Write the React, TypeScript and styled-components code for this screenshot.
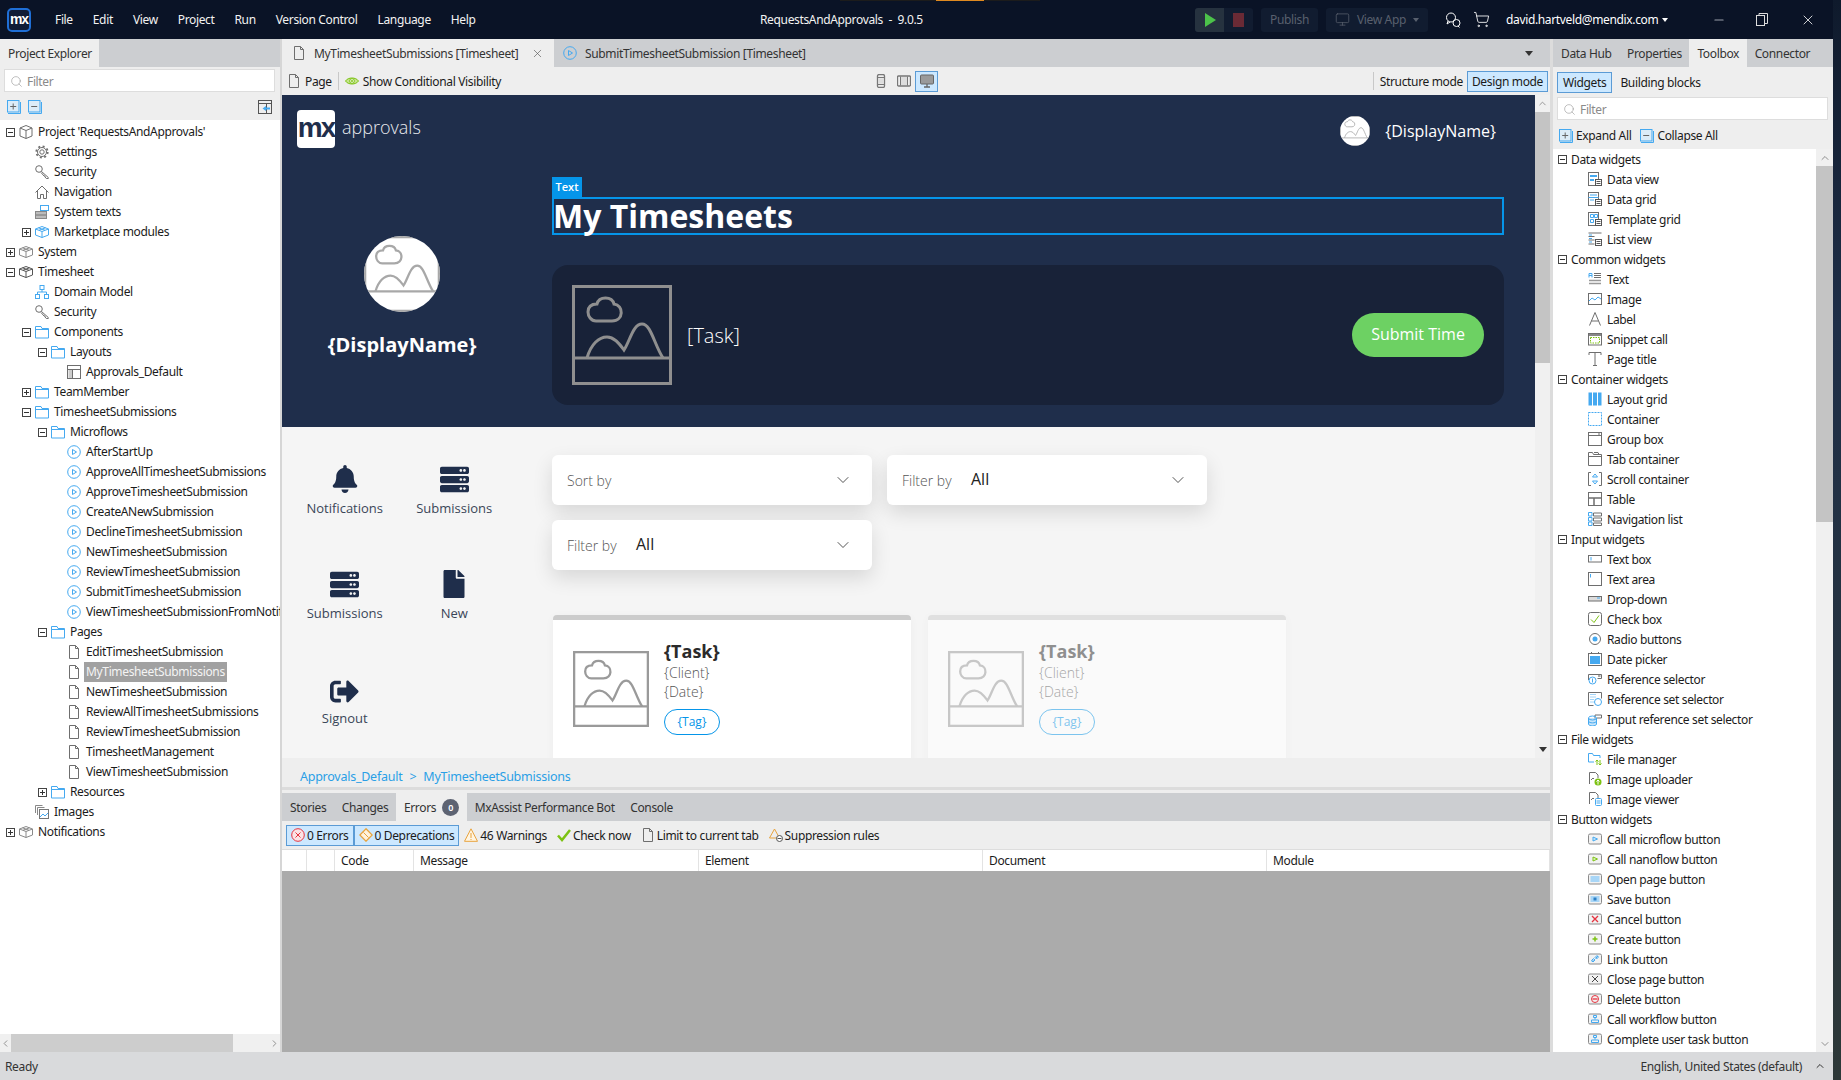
import React from "react";
import styled, { createGlobalStyle } from "styled-components";
import { ChevronDown, ChevronLeft, ChevronRight, ChevronUp, Minus, Monitor, Search, ShoppingCart, X } from "lucide-react";
import { FaBell, FaFile, FaServer, FaSignOutAlt } from "react-icons/fa";

const B = "#45a9f0";
const G = "#7cc212";
const R = "#e5333f";
const O = "#e8a33d";
const D = "#6e6e6e";

const GlobalStyle = createGlobalStyle`
    html, body {
        margin: 0;
        padding: 0;
        background: #1f2b3a;
    }
    body {
        font-family: "Noto Sans", "Open Sans", sans-serif;
        font-size: 12px;
        letter-spacing: -0.35px;
        color: #1b1b1b;
    }
    * {
        box-sizing: border-box;
    }
`;

const Screen = styled.div`
    display: flex;
    width: 1841px;
    height: 1080px;
    overflow: hidden;
`;

const Desktop = styled.div`
    flex: 1;
    background: linear-gradient(#0f1a2c, #1f2f48 30%, #2d3838);
`;

const Window = styled.div`
    width: 1833px;
    height: 1080px;
    display: flex;
    flex-direction: column;
    background: #eee;
`;

const TopBar = styled.div`
    position: relative;
    height: 39px;
    flex: none;
    display: flex;
    align-items: center;
    background: #0a1326;
    color: #f2f2f2;
`;

const Progress = styled.div`
    position: absolute;
    top: 0;
    left: 840px;
    width: 200px;
    height: 1px;
    background: #1c1c1c;
    &::after {
        content: "";
        display: block;
        width: 48px;
        height: 1px;
        margin-left: 96px;
        background: #e08a20;
    }
`;

const TopLogo = styled.div`
    width: 24px;
    height: 24px;
    margin-left: 7px;
    border: 2px solid #1f6fd6;
    border-radius: 5px;
    background: #101c36;
    color: #fff;
    font: bold 14px/18px "Liberation Sans", sans-serif;
    letter-spacing: -1px;
    text-align: center;
`;

const Menu = styled.div`
    width: 729px;
    padding-left: 24px;
    display: flex;
    gap: 20px;
`;

const AppTitle = styled.div`
    white-space: pre;
`;

const TopRight = styled.div`
    margin-left: auto;
    width: 638px;
    display: flex;
    align-items: center;
    color: #fff;
`;

const RunGroup = styled.div`
    display: flex;
    height: 24px;
    border-radius: 3px;
    overflow: hidden;
    background: #111c30;
`;

const RunButton = styled.div<{ $active?: boolean }>`
    width: 29px;
    display: flex;
    align-items: center;
    justify-content: center;
    background: ${(p) => (p.$active ? "#26323f" : "transparent")};
`;

const TopButton = styled.div`
    height: 24px;
    margin-left: 8px;
    padding: 0 9px;
    display: flex;
    align-items: center;
    gap: 7px;
    border-radius: 3px;
    background: #111c30;
    color: #59606e;
`;

const Caret = styled.span<{ $color: string }>`
    width: 0;
    height: 0;
    border: 3px solid transparent;
    border-top: 4px solid ${(p) => p.$color};
    margin-top: 3px;
`;

const TopIcon = styled.div<{ $left: number }>`
    margin-left: ${(p) => p.$left}px;
    display: flex;
    align-items: center;
`;

const Email = styled.div`
    margin-left: 16px;
    display: flex;
    align-items: center;
    gap: 4px;
`;

const Main = styled.div`
    flex: 1;
    min-height: 0;
    display: flex;
`;

const StatusBar = styled.div`
    height: 28px;
    flex: none;
    display: flex;
    align-items: center;
    justify-content: space-between;
    padding: 0 7px 0 5px;
    background: #d9dadc;
    color: #333;
`;

const StatusRight = styled.div`
    display: flex;
    align-items: center;
    gap: 12px;
`;

const LeftPane = styled.div`
    width: 282px;
    flex: none;
    display: flex;
    flex-direction: column;
    border-right: 2px solid #d6d6d6;
`;

const TabStrip = styled.div`
    height: 28px;
    flex: none;
    display: flex;
    background: #ccced1;
    color: #333;
`;

const PaneTab = styled.div<{ $active?: boolean }>`
    padding: 0 7.5px 0 8px;
    display: flex;
    align-items: center;
    gap: 6px;
    white-space: nowrap;
    background: ${(p) => (p.$active ? "#eeeeee" : "transparent")};
`;

const FilterBox = styled.div`
    height: 23px;
    display: flex;
    align-items: center;
    gap: 4px;
    padding: 2px 0 0 5px;
    background: #fff;
    border: 1px solid #ddd;
    color: #8a8a8a;
`;

const LeftFilter = styled(FilterBox)`
    margin: 2px 5px 1px 4px;
`;

const LeftTools = styled.div`
    height: 27px;
    flex: none;
    display: flex;
    align-items: center;
    gap: 7px;
    padding: 0 8px 0 7px;
`;

const ToolGap = styled.div`
    flex: 1;
`;

const TreeArea = styled.div`
    flex: 1;
    min-height: 0;
    padding-top: 2px;
    overflow: hidden;
    background: #fff;
`;

const TreeRow = styled.div<{ $level: number }>`
    height: 20px;
    display: flex;
    align-items: center;
    white-space: nowrap;
    padding-left: ${(p) => 6 + p.$level * 16}px;
`;

const Expander = styled.span<{ $state?: "open" | "closed" }>`
    position: relative;
    width: 9px;
    height: 9px;
    flex: none;
    margin-right: 4px;
    border: ${(p) => (p.$state ? "1px solid #444" : "none")};
    &::before {
        content: "";
        display: ${(p) => (p.$state ? "block" : "none")};
        position: absolute;
        left: 1px;
        top: 3px;
        width: 5px;
        height: 1px;
        background: #333;
    }
    &::after {
        content: "";
        display: ${(p) => (p.$state === "closed" ? "block" : "none")};
        position: absolute;
        left: 3px;
        top: 1px;
        width: 1px;
        height: 5px;
        background: #333;
    }
`;

const TreeLabel = styled.span<{ $selected?: boolean }>`
    margin-left: 3px;
    padding: 0 2px;
    line-height: 20px;
    background: ${(p) => (p.$selected ? "#a1a1a1" : "transparent")};
    color: ${(p) => (p.$selected ? "#f4f4f4" : "inherit")};
`;

const HScroll = styled.div`
    height: 18px;
    flex: none;
    display: flex;
    align-items: center;
    background: #f0f0f0;
    color: #8a8a8a;
`;

const HThumb = styled.div`
    width: 222px;
    height: 100%;
    margin: 0 auto 0 0;
    background: #cdcdcd;
`;

const Center = styled.div`
    width: 1268px;
    flex: none;
    display: flex;
    flex-direction: column;
`;

const EditorTab = styled(PaneTab)`
    width: 272px;
    padding: 0 10px;
    gap: 8px;
`;

const EditorTabInactive = styled(PaneTab)`
    margin-left: 1px;
    gap: 8px;
`;

const TabText = styled.span`
    flex: 1;
`;

const StripEnd = styled.div`
    margin-left: auto;
    width: 25px;
    display: flex;
    align-items: center;
`;

const DownTriangle = styled.span`
    width: 0;
    height: 0;
    border: 4px solid transparent;
    border-top: 5px solid #333;
    margin-top: 4px;
`;

const EditorTools = styled.div`
    height: 28px;
    flex: none;
    display: grid;
    grid-template-columns: 582px auto 1fr;
    align-items: center;
    padding: 0 2px 0 5px;
`;

const ToolGroup = styled.div<{ $end?: boolean }>`
    display: flex;
    align-items: center;
    gap: 4px;
    justify-content: ${(p) => (p.$end ? "flex-end" : "flex-start")};
`;

const Separator = styled.span`
    width: 1px;
    height: 18px;
    margin: 0 2px;
    background: #c8c8c8;
`;

const ToggleButton = styled.div<{ $on?: boolean }>`
    height: 21px;
    padding: 0 4px;
    display: flex;
    align-items: center;
    gap: 2px;
    border: 1px solid ${(p) => (p.$on ? "#5b9bd5" : "transparent")};
    background: ${(p) => (p.$on ? "#cce8ff" : "transparent")};
    white-space: nowrap;
`;

const DeviceGroup = styled.div`
    display: flex;
    align-items: center;
`;

const DeviceButton = styled(ToggleButton)`
    width: 23px;
    padding: 0;
    justify-content: center;
`;

const CanvasArea = styled.div`
    height: 663px;
    flex: none;
    display: flex;
`;

const Page = styled.div`
    flex: 1;
    min-width: 0;
    overflow: hidden;
    background: #f5f5f5;
    font-family: "Open Sans", sans-serif;
    letter-spacing: 0;
`;

const VScroll = styled.div<{ $width: number }>`
    width: ${(p) => p.$width}px;
    flex: none;
    display: flex;
    flex-direction: column;
    background: #f0f0f0;
    color: #8f8f8f;
`;

const ScrollArrow = styled.div`
    height: 17px;
    flex: none;
    display: flex;
    align-items: center;
    justify-content: center;
`;

const VThumb = styled.div<{ $height: number }>`
    height: ${(p) => p.$height}px;
    flex: none;
    background: #c4c4c4;
`;

const ScrollRest = styled.div`
    flex: 1;
`;

const Hero = styled.div`
    height: 332px;
    padding: 15px 31px 22px 15px;
    background: #1f2e4b;
    color: #fff;
`;

const HeroHeader = styled.div`
    display: flex;
    align-items: center;
    justify-content: space-between;
    height: 38px;
`;

const Brand = styled.div`
    display: flex;
    align-items: center;
    gap: 7px;
    font-size: 18px;
    font-weight: 300;
    color: #e9ebef;
`;

const BrandWord = styled.span`
    padding-bottom: 4px;
`;

const BrandMark = styled.div`
    width: 38px;
    height: 38px;
    border-radius: 4px;
    background: #fff;
    color: #1f2e4b;
    font: bold 28px/36px "Liberation Sans", sans-serif;
    letter-spacing: -2px;
    text-align: center;
`;

const HeaderUser = styled.div`
    display: flex;
    align-items: center;
    gap: 15px;
    margin: 4px 8px 0 0;
    font-size: 16px;
`;

const Avatar = styled.div<{ $size: number }>`
    width: ${(p) => p.$size}px;
    height: ${(p) => p.$size}px;
    flex: none;
    border-radius: 50%;
    overflow: hidden;
    background: #fff;
`;

const HeroBody = styled.div`
    margin-top: 29px;
    display: grid;
    grid-template-columns: 210px 1fr;
    column-gap: 45px;
`;

const Profile = styled.div`
    padding-top: 59px;
    display: flex;
    flex-direction: column;
    align-items: center;
`;

const ProfileName = styled.div`
    margin-top: 19px;
    font-size: 20px;
    line-height: 27px;
    font-weight: 700;
`;

const SelectionTag = styled.div`
    width: 30px;
    height: 20px;
    background: #0595e9;
    color: #fff;
    font-size: 11px;
    font-weight: 600;
    line-height: 20px;
    text-align: center;
`;

const SelectedTitle = styled.h1`
    margin: 0;
    height: 38px;
    padding: 0;
    border: 2px solid #0595e9;
    font-size: 32px;
    line-height: 33px;
    font-weight: 700;
    text-indent: -1px;
`;

const TaskPanel = styled.div`
    margin-top: 30px;
    height: 140px;
    padding: 20px;
    display: flex;
    align-items: center;
    border-radius: 16px;
    background: #182238;
`;

const TaskName = styled.div`
    margin-left: 15px;
    flex: 1;
    font-size: 20px;
    font-weight: 300;
`;

const SubmitButton = styled.div`
    width: 132px;
    height: 44px;
    border-radius: 22px;
    background: #6dd163;
    font-size: 16px;
    font-weight: 400;
    line-height: 42px;
    text-align: center;
`;

const Lower = styled.div`
    display: flex;
    padding: 28px 0 0 8px;
`;

const NavGrid = styled.div`
    width: 219px;
    margin: 10px 43px 0 0;
    display: grid;
    grid-template-columns: 1fr 1fr;
    grid-auto-rows: 105px;
    align-self: flex-start;
`;

const NavCell = styled.div`
    display: flex;
    flex-direction: column;
    align-items: center;
    font-size: 13px;
    color: #3a4658;
`;

const NavIcon = styled.div<{ $drop?: boolean }>`
    height: 28px;
    padding-top: ${(p) => (p.$drop ? 4 : 0)}px;
    display: flex;
    align-items: center;
    color: #1f2e4b;
`;

const NavLabel = styled.div`
    margin-top: 6px;
    line-height: 18px;
`;

const Content = styled.div`
    flex: 1;
`;

const SelectGrid = styled.div`
    display: grid;
    grid-template-columns: 320px 320px;
    gap: 15px;
`;

const SelectBox = styled.div`
    height: 50px;
    padding: 0 19px 0 15px;
    display: flex;
    align-items: center;
    border-radius: 6px;
    background: #fff;
    box-shadow: 0 8px 20px rgba(0, 0, 0, 0.12);
`;

const SelectLabel = styled.span`
    width: 69px;
    font-size: 14px;
    font-weight: 300;
    color: #555;
`;

const SelectValue = styled.span`
    flex: 1;
    padding-bottom: 2px;
    font-size: 16px;
    color: #222;
`;

const CardRow = styled.div`
    margin: 45px 0 0 1px;
    display: flex;
    gap: 17px;
`;

const Card = styled.div<{ $faded?: boolean }>`
    width: 358px;
    height: 200px;
    padding: 19px 20px;
    display: flex;
    gap: 15px;
    border-top: 5px solid #cccccc;
    border-radius: 4px 4px 0 0;
    background: #fff;
    box-shadow: 0 2px 10px rgba(0, 0, 0, 0.04);
    opacity: ${(p) => (p.$faded ? 0.5 : 1)};
`;

const CardImage = styled.div`
    width: 76px;
    height: 76px;
    margin-top: 12px;
    flex: none;
`;

const CardText = styled.div`
    display: flex;
    flex-direction: column;
    align-items: flex-start;
`;

const CardTitle = styled.div`
    font-size: 18px;
    line-height: 24px;
    font-weight: 700;
    color: #2b2b2b;
`;

const CardLine = styled.div`
    font-size: 14px;
    line-height: 19px;
    font-weight: 300;
    color: #555;
`;

const TagPill = styled.div`
    margin-top: 8px;
    width: 56px;
    height: 26px;
    border: 1px solid #0595e9;
    border-radius: 13px;
    color: #0595e9;
    font-size: 12px;
    line-height: 24px;
    text-align: center;
`;

const Breadcrumb = styled.div`
    height: 32px;
    flex: none;
    display: flex;
    align-items: center;
    gap: 7px;
    padding: 8px 0 0 18px;
    color: #2a9fe6;
    font-size: 12.5px;
    letter-spacing: -0.25px;
    border-bottom: 3px solid #dcdcdc;
`;

const ErrorsTabs = styled(TabStrip)`
    margin-top: 3px;
`;

const Badge = styled.span`
    width: 17px;
    height: 17px;
    border-radius: 50%;
    background: #5d6372;
    color: #fff;
    font-size: 9px;
    font-weight: 600;
    line-height: 17px;
    text-align: center;
`;

const ErrorsTools = styled.div`
    height: 28px;
    flex: none;
    display: flex;
    align-items: center;
    padding-left: 4px;
`;

const TableHead = styled.div`
    height: 22px;
    flex: none;
    display: grid;
    grid-template-columns: 25px 28px 79px 285px 284px 284px 1fr;
    background: #fff;
    border-top: 1px solid #ddd;
`;

const HeadCell = styled.div`
    padding-left: 6px;
    line-height: 21px;
    border-right: 1px solid #e3e3e3;
`;

const TableBody = styled.div`
    flex: 1;
    background: #ababab;
`;

const RightPane = styled.div`
    flex: 1;
    min-width: 0;
    display: flex;
    flex-direction: column;
    border-left: 3px solid #dcdcdc;
`;

const SubTabs = styled.div`
    height: 28px;
    flex: none;
    display: flex;
    align-items: center;
    gap: 2px;
    padding: 2px 0 0 4px;
`;

const SubTab = styled(ToggleButton)`
    padding: 0 5px;
`;

const RightFilter = styled(FilterBox)`
    margin: 2px 5px 0 4px;
`;

const ExpandRow = styled.div`
    height: 29px;
    flex: none;
    display: flex;
    align-items: center;
    padding: 2px 0 0 6px;
`;

const ExpandLabel = styled.span`
    margin: 0 9px 0 3px;
`;

const ToolboxBody = styled.div`
    flex: 1;
    min-height: 0;
    display: flex;
`;

const ToolboxList = styled.div`
    flex: 1;
    overflow: hidden;
    background: #fff;
`;

const SectionRow = styled.div`
    height: 20px;
    display: flex;
    align-items: center;
    padding-left: 5px;
`;

const WidgetRow = styled.div`
    height: 20px;
    display: flex;
    align-items: center;
    gap: 5px;
    padding-left: 35px;
    white-space: nowrap;
`;

const IconSvg = styled.svg`
    width: 14px;
    height: 14px;
    flex: none;
    fill: none;
    stroke: ${D};
    stroke-width: 1;
`;

const doc = <path d="M2.5.5h6l3 3v10h-9zM8.5.5v3h3" />;
const stack = (
    <>
        <rect x="7.5" y="7.5" width="6" height="6" fill="#fff" stroke="#555" />
        <path d="M8.5 9.5h4M8.5 11.5h4" stroke="#555" />
    </>
);
const frame = (inner: React.ReactNode) => (
    <>
        <rect x=".5" y="2" width="13" height="10" rx="1.5" fill="#f2f2f2" stroke="#8a8a8a" />
        {inner}
    </>
);
const moduleBox = (color: string) => (
    <path stroke={color} d="M.5 4 7 1.5 13.500 4v6L7 12.500.5 10zM.5 4 7 6.500 13.500 4M7 6.500v6M3.500 2.800l6.500 2.500M10.500 2.800 4 5.300" />
);

const glyphs: Record<string, React.ReactNode> = {
    project: <path d="M7 .5l6 2.500v8l-6 2.500L1 11V3zM1 3l6 2.500L13 3M7 5.500v8" />,
    module: moduleBox("#8a8a8a"),
    moduleDark: moduleBox("#555"),
    market: moduleBox(B),
    gear: (
        <>
            <circle cx="7" cy="7" r="2.200" />
            <circle cx="7" cy="7" r="4.500" />
            <circle cx="7" cy="7" r="5.700" strokeWidth="1.800" strokeDasharray="2 2.470" />
        </>
    ),
    key: (
        <>
            <circle cx="4" cy="4" r="3.300" />
            <path d="M6.500 6.500 13.300 12.500v1h-2L10 12V11H9L6 7.500" />
        </>
    ),
    house: <path d="M.5 7.500 7 1l6.500 6.500M2.500 6v7.500H5.500V9.500h3v4h3V6" />,
    texts: (
        <>
            <rect x="5.500" y=".5" width="8" height="5" stroke={B} />
            <rect x=".5" y="6.500" width="11" height="7" fill="#bbb" stroke="#888" />
            <path d="M1 10h10" stroke="#777" />
        </>
    ),
    domain: (
        <g stroke={B}>
            <rect x="5" y=".5" width="4" height="4" />
            <rect x=".5" y="9.500" width="4" height="4" />
            <rect x="9.500" y="9.500" width="4" height="4" />
            <path d="M7 4.500v2.500M2.500 9.500V7h9v2.500" />
        </g>
    ),
    folder: <path stroke={B} d="M.5 1.500h5.500l1 2h6.500v9.500H.5zM.5 4.500h13" />,
    layout: (
        <>
            <path d="M1.500 4.500h4v9h-4z" fill="#ccc" stroke="none" />
            <rect x=".5" y=".5" width="13" height="13" />
            <path d="M.5 4.500h13M5.500 4.500v9" />
        </>
    ),
    flow: (
        <>
            <circle cx="7" cy="7" r="6.300" stroke={B} />
            <path d="M5.500 4.500 9.500 7l-4 2.500z" stroke={B} />
        </>
    ),
    page: doc,
    images: (
        <>
            <path d="M.5 8V.5h7M2.500 10V2.500h7" stroke="#888" />
            <rect x="4.500" y="4.500" width="9" height="9" fill="#fff" stroke="#777" />
            <path d="M5 12l3-3 2 2 3-3" stroke={B} />
        </>
    ),
    dataview: (
        <>
            <rect x=".5" y=".5" width="10" height="13" />
            <path d="M2 3h7v2H2zM2 7h4v2H2z" fill={B} stroke="none" />
            {stack}
        </>
    ),
    datagrid: (
        <>
            <rect x=".5" y=".5" width="10" height="13" />
            <path d="M2 3h7M.5 5.500h10M2 8h4" stroke={B} />
            {stack}
        </>
    ),
    templategrid: (
        <>
            <rect x=".5" y=".5" width="10" height="13" />
            <path d="M2.500 2.500h3v3h-3zM6.500 2.500h3v3h-3zM2.500 7.500h3v3h-3z" stroke={B} />
            {stack}
        </>
    ),
    listview: (
        <>
            <path d="M.5 1h13M.5 4.500h6M.5 8h6M.5 12h6" />
            <path d="M1 3h3M1 6.500h3M1 10h3" stroke={B} />
            {stack}
        </>
    ),
    text: (
        <>
            <path d="M1 5.500V1.500h3v4M1 3.500h3" stroke={B} />
            <path d="M6 1.500h7M6 3.500h7M6 5.500h7" />
            <path d="M1 8.500h12M1 11.500h12" strokeWidth="1.500" stroke="#999" />
        </>
    ),
    image: (
        <>
            <rect x=".5" y="1.500" width="13" height="11" />
            <path d="M1 9l3-3 3 2 3-3 3 2" stroke={B} />
        </>
    ),
    label: <path d="M1.500 13.500 7 .5l5.500 13M3.500 9h7" />,
    snippet: (
        <>
            <rect x=".5" y="1.500" width="13" height="11.500" />
            <path d="M1 2h12v2H1z" fill="#888" stroke="none" />
            <rect x="2.500" y="5.500" width="9" height="5.500" stroke={G} strokeDasharray="1.500 1" />
        </>
    ),
    pagetitle: <path d="M1 3V.5h12V3M7 .5v13M5 13.500h4" />,
    layoutgrid: <path d="M.5.5h3.500v13H.5zM5 .5h4v13H5zM10 .5h3.500v13H10z" fill={B} stroke="none" />,
    container: <rect x=".5" y=".5" width="13" height="13" stroke={B} strokeDasharray="2 1" />,
    groupbox: (
        <>
            <rect x=".5" y=".5" width="13" height="13" />
            <path d="M.5 3.500h13M10 2h2" />
        </>
    ),
    tabcontainer: <path d="M.5 13.500V.5h4l1 2h8v11zM.5 4.500h13M6 .5h4l1 2" />,
    scroll: (
        <>
            <path d="M3 .5H.5v13H3M11 .5h2.500v13H11" />
            <path d="M4.500 5 7 2l2.500 3zM4.500 9 7 12l2.500-3z" stroke={B} />
        </>
    ),
    table: (
        <>
            <rect x=".5" y=".5" width="13" height="13" />
            <path d="M.5 6h13M6 6v7.500" strokeWidth="1.500" />
        </>
    ),
    navlist: (
        <>
            <path d="M.5.5h3.500v3.500H.5zM.5 5.500h3.500v3.500H.5zM.5 10h3.500v3.500H.5z" stroke={B} />
            <path d="M5.500 1h8v3h-8zM5.500 6h8v3h-8zM5.500 11h8v2.500h-8z" />
        </>
    ),
    textbox: (
        <>
            <rect x=".5" y="3.500" width="13" height="6.500" />
            <path d="M3 5v3.500" stroke={B} />
        </>
    ),
    textarea: (
        <>
            <rect x=".5" y=".5" width="13" height="13" />
            <path d="M2.500 2v3.500" stroke={B} />
        </>
    ),
    dropdown: (
        <>
            <rect x=".5" y="4.500" width="13" height="4.500" fill="#ddd" />
            <path d="M9 6h3" stroke={B} />
        </>
    ),
    checkbox: (
        <>
            <rect x=".5" y=".5" width="13" height="13" rx="2" />
            <path d="M3 7.500 6 10.500l5-7" stroke={G} />
        </>
    ),
    radio: (
        <>
            <circle cx="7" cy="7" r="5.500" />
            <circle cx="7" cy="7" r="2.500" fill={B} stroke="none" />
        </>
    ),
    datepicker: (
        <>
            <rect x=".5" y="1.500" width="13" height="12" />
            <path d="M2 4h10v8H2z" fill={B} stroke="none" />
            <path d="M3.500 0v2M10.500 0v2" />
        </>
    ),
    refselector: (
        <>
            <path d="M.5 8V2.500h13v4h-4" />
            <path d="M10 4h2.500" stroke="#555" />
            <circle cx="4.500" cy="8.500" r="3.500" stroke={B} />
            <path d="M4.500 6.500v4" stroke={B} />
        </>
    ),
    refset: (
        <>
            <path d="M.5 13.500V.5h13v6M.5 13.500h5" />
            <path d="M2.500 2.500h6M2.500 5h6M2.500 7.500h3M2.500 10h3" stroke={B} strokeDasharray="1 1" />
            <circle cx="10" cy="10" r="3.500" stroke={B} />
        </>
    ),
    inputref: (
        <>
            <path d="M7 6.500V3h6.500v3H9" />
            <ellipse cx="4.500" cy="6" rx="4" ry="2" stroke={B} />
            <path d="M.5 6v6c0 2.500 8 2.500 8 0V6M.5 9c0 2.500 8 2.500 8 0" stroke={B} fill={B} fillOpacity=".3" />
        </>
    ),
    filemanager: (
        <>
            <path d="M.5 10V1.500h4l1 2h6.500v2.500M.5 10H6" stroke={B} />
            <path d="M9 8v5M7.500 9.500 9 8l1.500 1.500M12 13V8M10.500 11.500 12 13l1.500-1.500" stroke={G} />
        </>
    ),
    imageuploader: (
        <>
            <path d="M1.500 12V.5h6l2.500 2.500v3" />
            <path d="M3 8l2-2 1 1" />
            <circle cx="10" cy="10" r="3.500" fill={G} stroke="none" />
            <path d="M10 12.500v-4.500M8.500 9.500 10 8l1.500 1.500" stroke="#fff" />
        </>
    ),
    imageviewer: (
        <>
            <path d="M1.500 12V.5h6l2.500 2.500v3" />
            <path d="M3 8l2-2 1 1" />
            <rect x="7.500" y="6.500" width="6" height="7" rx="1" stroke={B} />
            <path d="M8.500 9h4M8.500 11h4" stroke={B} />
        </>
    ),
    microbtn: frame(<path d="M5 5l4.500 2L5 9z" stroke={B} fill="#cfe8fb" />),
    nanobtn: frame(<path d="M5 5l4.500 2L5 9z" stroke={G} fill="#e6f5c8" />),
    openbtn: frame(<path d="M2.500 4h9v6h-9z" fill="#a8d6f7" stroke="none" />),
    savebtn: frame(
        <>
            <path d="M2.500 4h9v6h-9z" fill="#a8d6f7" stroke="none" />
            <path d="M5.500 5.500h3v3h-3z" fill="#2c7fc4" stroke="none" />
        </>
    ),
    cancelbtn: frame(<path d="M4 4l6 6M10 4l-6 6" stroke={R} strokeWidth="1.300" />),
    createbtn: frame(<path d="M7 4.500v5M4.500 7h5" stroke={G} strokeWidth="1.500" />),
    linkbtn: frame(<path d="M4 9.500l2-2M8 6l2-2M3.500 8.500l2-2 1.500 1.500-2 2zM7 5.500l2-2 1.500 1.500-2 2z" stroke={B} />),
    closebtn: frame(<path d="M4 4l6 6M10 4l-6 6" stroke="#444" />),
    deletebtn: frame(
        <>
            <circle cx="7" cy="7" r="3.500" stroke={R} />
            <path d="M4.500 7h5" stroke={R} strokeWidth="1.300" />
        </>
    ),
    workflowbtn: frame(<path d="M5.500 3.500h3v2h-3zM7 5.500v2M3.500 8h7v2.500h-7z" stroke={B} />),
    expand: (
        <>
            <path d="M1 13.500h12.500V2" stroke={B} />
            <rect x=".5" y=".5" width="11.500" height="11.500" fill="#dcecf8" stroke={B} />
            <path d="M6.200 3.500v6M3.200 6.500h6" stroke="#666" />
        </>
    ),
    collapse: (
        <>
            <path d="M1 13.500h12.500V2" stroke={B} />
            <rect x=".5" y=".5" width="11.500" height="11.500" fill="#dcecf8" stroke={B} />
            <path d="M3.200 6.500h6" stroke="#666" />
        </>
    ),
    panel: (
        <>
            <rect x=".5" y=".5" width="13" height="13" stroke="#555" />
            <path d="M.5 3.500h13M8.500 3.500v10" stroke="#555" />
            <path d="M8 6 4.500 8.500 8 11zM8 7.500h4v2H8z" fill={B} stroke="none" />
        </>
    ),
    eye: (
        <>
            <path d="M.5 7C3 3 11 3 13.500 7 11 11 3 11 .5 7z" fill="#c5e58d" stroke={G} />
            <circle cx="7" cy="7" r="2.300" fill="#fff" stroke={G} />
            <circle cx="7" cy="7" r="1" fill={G} stroke="none" />
        </>
    ),
    errors: (
        <>
            <circle cx="7" cy="7" r="6.300" stroke={R} fill="#fbe3e4" />
            <path d="M4.500 4.500l5 5M9.500 4.500l-5 5" stroke={R} />
        </>
    ),
    deprecations: (
        <>
            <path d="M7 .8 13.200 7 7 13.200.8 7z" stroke={O} strokeWidth="1.300" fill="#fff3dd" />
            <path d="M4.500 4.500 9.500 9.500" stroke={O} />
        </>
    ),
    warning: (
        <>
            <path d="M7 .8 13.500 13.300H.5z" stroke={O} fill="#fff5e3" />
            <path d="M7 5v5M7 11v1" stroke={O} />
        </>
    ),
    check: <path d="M1 7.500 5 12 13 2" stroke={G} strokeWidth="2.500" />,
    suppression: (
        <>
            <path d="M5.500 1 10.500 10H.5z" stroke={O} />
            <circle cx="10.500" cy="10.500" r="3" stroke="#555" fill="#fff" />
            <path d="M8.500 10.500h4" stroke="#555" />
        </>
    ),
    mobile: (
        <>
            <rect x="3.500" y=".5" width="7" height="13" rx="1.500" stroke="#777" strokeWidth="1.300" />
            <path d="M4 3.500h6M4 10.500h6" stroke="#777" />
            <path d="M5 4.500h4v5H5z" fill="#ddd" stroke="none" />
        </>
    ),
    tablet: (
        <>
            <rect x=".5" y="2" width="13" height="10" rx="1" stroke="#777" strokeWidth="1.300" />
            <path d="M3.500 2.500v9M10.500 2.500v9" stroke="#777" />
            <path d="M4 3h6v8H4z" fill="#ddd" stroke="none" />
        </>
    ),
    desktop: (
        <>
            <rect x=".5" y="1" width="13" height="9" rx="1" fill="#9a9a9a" stroke="#666" />
            <path d="M7 10v2.500M4 13h6" stroke="#666" strokeWidth="1.300" />
        </>
    ),
};

const Icon = ({ name }: { name: string }) => <IconSvg viewBox="0 0 14 14">{glyphs[name]}</IconSvg>;

const Placeholder = ({ color, width }: { color: string; width: number }) => (
    <svg viewBox="0 0 100 100" width={width} height={width} fill="none" stroke={color} strokeWidth="3" display="block">
        <rect x="1.500" y="1.500" width="97" height="97" />
        <path d="M0 73h100" />
        <path d="M24 36h16c12 0 12-16 2-17-2-8-15-8-17 0-7 0-9 4-9 8s3 9 8 9z" />
        <path d="M15 73c4-14 12-21 20-21 7 0 12 6 17 13 6-9 9-26 18-26 9 0 12 20 21 34" />
    </svg>
);

type TreeItem = [number, string, string, ("open" | "closed")?, boolean?];

const treeItems: TreeItem[] = [
    [0, "project", "Project 'RequestsAndApprovals'", "open"],
    [1, "gear", "Settings"],
    [1, "key", "Security"],
    [1, "house", "Navigation"],
    [1, "texts", "System texts"],
    [1, "market", "Marketplace modules", "closed"],
    [0, "module", "System", "closed"],
    [0, "moduleDark", "Timesheet", "open"],
    [1, "domain", "Domain Model"],
    [1, "key", "Security"],
    [1, "folder", "Components", "open"],
    [2, "folder", "Layouts", "open"],
    [3, "layout", "Approvals_Default"],
    [1, "folder", "TeamMember", "closed"],
    [1, "folder", "TimesheetSubmissions", "open"],
    [2, "folder", "Microflows", "open"],
    [3, "flow", "AfterStartUp"],
    [3, "flow", "ApproveAllTimesheetSubmissions"],
    [3, "flow", "ApproveTimesheetSubmission"],
    [3, "flow", "CreateANewSubmission"],
    [3, "flow", "DeclineTimesheetSubmission"],
    [3, "flow", "NewTimesheetSubmission"],
    [3, "flow", "ReviewTimesheetSubmission"],
    [3, "flow", "SubmitTimesheetSubmission"],
    [3, "flow", "ViewTimesheetSubmissionFromNotif"],
    [2, "folder", "Pages", "open"],
    [3, "page", "EditTimesheetSubmission"],
    [3, "page", "MyTimesheetSubmissions", undefined, true],
    [3, "page", "NewTimesheetSubmission"],
    [3, "page", "ReviewAllTimesheetSubmissions"],
    [3, "page", "ReviewTimesheetSubmission"],
    [3, "page", "TimesheetManagement"],
    [3, "page", "ViewTimesheetSubmission"],
    [2, "folder", "Resources", "closed"],
    [1, "images", "Images"],
    [0, "module", "Notifications", "closed"],
];

const toolbox: { title: string; items: [string, string][] }[] = [
    {
        title: "Data widgets",
        items: [["dataview", "Data view"], ["datagrid", "Data grid"], ["templategrid", "Template grid"], ["listview", "List view"]],
    },
    {
        title: "Common widgets",
        items: [["text", "Text"], ["image", "Image"], ["label", "Label"], ["snippet", "Snippet call"], ["pagetitle", "Page title"]],
    },
    {
        title: "Container widgets",
        items: [
            ["layoutgrid", "Layout grid"],
            ["container", "Container"],
            ["groupbox", "Group box"],
            ["tabcontainer", "Tab container"],
            ["scroll", "Scroll container"],
            ["table", "Table"],
            ["navlist", "Navigation list"],
        ],
    },
    {
        title: "Input widgets",
        items: [
            ["textbox", "Text box"],
            ["textarea", "Text area"],
            ["dropdown", "Drop-down"],
            ["checkbox", "Check box"],
            ["radio", "Radio buttons"],
            ["datepicker", "Date picker"],
            ["refselector", "Reference selector"],
            ["refset", "Reference set selector"],
            ["inputref", "Input reference set selector"],
        ],
    },
    {
        title: "File widgets",
        items: [["filemanager", "File manager"], ["imageuploader", "Image uploader"], ["imageviewer", "Image viewer"]],
    },
    {
        title: "Button widgets",
        items: [
            ["microbtn", "Call microflow button"],
            ["nanobtn", "Call nanoflow button"],
            ["openbtn", "Open page button"],
            ["savebtn", "Save button"],
            ["cancelbtn", "Cancel button"],
            ["createbtn", "Create button"],
            ["linkbtn", "Link button"],
            ["closebtn", "Close page button"],
            ["deletebtn", "Delete button"],
            ["workflowbtn", "Call workflow button"],
            ["workflowbtn", "Complete user task button"],
        ],
    },
];

const menus = ["File", "Edit", "View", "Project", "Run", "Version Control", "Language", "Help"];
const columns = ["", "", "Code", "Message", "Element", "Document", "Module"];

const TaskCard = ({ faded }: { faded?: boolean }) => (
    <Card $faded={faded}>
        <CardImage>
            <Placeholder color="#9a9a9a" width={76} />
        </CardImage>
        <CardText>
            <CardTitle>{"{Task}"}</CardTitle>
            <CardLine>{"{Client}"}</CardLine>
            <CardLine>{"{Date}"}</CardLine>
            <TagPill>{"{Tag}"}</TagPill>
        </CardText>
    </Card>
);

const SelectField = ({ label, value }: { label: string; value?: string }) => (
    <SelectBox>
        <SelectLabel>{label}</SelectLabel>
        <SelectValue>{value}</SelectValue>
        <ChevronDown size={20} strokeWidth={1} color="#333" />
    </SelectBox>
);

const App: React.FC = () => (
    <Screen>
        <GlobalStyle />
        <Window>
            <TopBar>
                <Progress />
                <TopLogo>mx</TopLogo>
                <Menu>
                    {menus.map((m) => (
                        <span key={m}>{m}</span>
                    ))}
                </Menu>
                <AppTitle>RequestsAndApprovals  -  9.0.5</AppTitle>
                <TopRight>
                    <RunGroup>
                        <RunButton $active>
                            <svg width="12" height="14" viewBox="0 0 12 14">
                                <path d="M1 0l11 7-11 7z" fill="#4cc24a" />
                            </svg>
                        </RunButton>
                        <RunButton>
                            <svg width="11" height="14" viewBox="0 0 11 14">
                                <path d="M0 0h11v14H0z" fill="#6a2a35" />
                            </svg>
                        </RunButton>
                    </RunGroup>
                    <TopButton>Publish</TopButton>
                    <TopButton>
                        <Monitor size={15} strokeWidth={1.2} />
                        View App
                        <Caret $color="#59606e" />
                    </TopButton>
                    <TopIcon $left={17}>
                        <svg width="16" height="16" viewBox="0 0 16 16" fill="none" stroke="#fff">
                            <circle cx="6" cy="5.500" r="4.500" />
                            <path d="M3 9l-1 3 3-2" />
                            <circle cx="11.500" cy="11" r="3.500" />
                            <path d="M13 14l1.500 1.500" />
                        </svg>
                    </TopIcon>
                    <TopIcon $left={12}>
                        <ShoppingCart size={17} strokeWidth={1.2} />
                    </TopIcon>
                    <Email>
                        david.hartveld@mendix.com
                        <Caret $color="#fff" />
                    </Email>
                    <TopIcon $left={44}>
                        <Minus size={14} color="#9aa0aa" />
                    </TopIcon>
                    <TopIcon $left={30}>
                        <svg width="12" height="13" viewBox="0 0 12 13" fill="none" stroke="#ddd">
                            <rect x=".5" y="2.500" width="8" height="10" />
                            <path d="M3 2.500V.5h8.500v10H8.500" />
                        </svg>
                    </TopIcon>
                    <TopIcon $left={32}>
                        <X size={16} strokeWidth={1.2} />
                    </TopIcon>
                </TopRight>
            </TopBar>
            <Main>
                <LeftPane>
                    <TabStrip>
                        <PaneTab $active>Project Explorer</PaneTab>
                    </TabStrip>
                    <LeftFilter>
                        <Search size={13} strokeWidth={1} />
                        Filter
                    </LeftFilter>
                    <LeftTools>
                        <Icon name="expand" />
                        <Icon name="collapse" />
                        <ToolGap />
                        <Icon name="panel" />
                    </LeftTools>
                    <TreeArea>
                        {treeItems.map(([level, icon, label, state, selected]) => (
                            <TreeRow key={`${label}-${icon}-${level}`} $level={level}>
                                <Expander $state={state} />
                                <Icon name={icon} />
                                <TreeLabel $selected={selected}>{label}</TreeLabel>
                            </TreeRow>
                        ))}
                    </TreeArea>
                    <HScroll>
                        <ChevronLeft size={11} />
                        <HThumb />
                        <ChevronRight size={11} />
                    </HScroll>
                </LeftPane>
                <Center>
                    <TabStrip>
                        <EditorTab $active>
                            <Icon name="page" />
                            <TabText>MyTimesheetSubmissions [Timesheet]</TabText>
                            <X size={13} strokeWidth={1.2} color="#555" />
                        </EditorTab>
                        <EditorTabInactive>
                            <Icon name="flow" />
                            SubmitTimesheetSubmission [Timesheet]
                        </EditorTabInactive>
                        <StripEnd>
                            <DownTriangle />
                        </StripEnd>
                    </TabStrip>
                    <EditorTools>
                        <ToolGroup>
                            <Icon name="page" />
                            Page
                            <Separator />
                            <Icon name="eye" />
                            Show Conditional Visibility
                        </ToolGroup>
                        <DeviceGroup>
                            <DeviceButton>
                                <Icon name="mobile" />
                            </DeviceButton>
                            <DeviceButton>
                                <Icon name="tablet" />
                            </DeviceButton>
                            <DeviceButton $on>
                                <Icon name="desktop" />
                            </DeviceButton>
                        </DeviceGroup>
                        <ToolGroup $end>
                            <Separator />
                            Structure mode
                            <ToggleButton $on>Design mode</ToggleButton>
                        </ToolGroup>
                    </EditorTools>
                    <CanvasArea>
                        <Page>
                            <Hero>
                                <HeroHeader>
                                    <Brand>
                                        <BrandMark>mx</BrandMark>
                                        <BrandWord>approvals</BrandWord>
                                    </Brand>
                                    <HeaderUser>
                                        <Avatar $size={30}>
                                            <Placeholder color="#b0b0b0" width={30} />
                                        </Avatar>
                                        {"{DisplayName}"}
                                    </HeaderUser>
                                </HeroHeader>
                                <HeroBody>
                                    <Profile>
                                        <Avatar $size={76}>
                                            <Placeholder color="#a8a8a8" width={76} />
                                        </Avatar>
                                        <ProfileName>{"{DisplayName}"}</ProfileName>
                                    </Profile>
                                    <div>
                                        <SelectionTag>Text</SelectionTag>
                                        <SelectedTitle>My Timesheets</SelectedTitle>
                                        <TaskPanel>
                                            <Placeholder color="#8f8f8f" width={100} />
                                            <TaskName>[Task]</TaskName>
                                            <SubmitButton>Submit Time</SubmitButton>
                                        </TaskPanel>
                                    </div>
                                </HeroBody>
                            </Hero>
                            <Lower>
                                <NavGrid>
                                    <NavCell>
                                        <NavIcon>
                                            <FaBell size={28} />
                                        </NavIcon>
                                        <NavLabel>Notifications</NavLabel>
                                    </NavCell>
                                    <NavCell>
                                        <NavIcon>
                                            <FaServer size={29} />
                                        </NavIcon>
                                        <NavLabel>Submissions</NavLabel>
                                    </NavCell>
                                    <NavCell>
                                        <NavIcon>
                                            <FaServer size={29} />
                                        </NavIcon>
                                        <NavLabel>Submissions</NavLabel>
                                    </NavCell>
                                    <NavCell>
                                        <NavIcon>
                                            <FaFile size={28} />
                                        </NavIcon>
                                        <NavLabel>New</NavLabel>
                                    </NavCell>
                                    <NavCell>
                                        <NavIcon $drop>
                                            <FaSignOutAlt size={29} />
                                        </NavIcon>
                                        <NavLabel>Signout</NavLabel>
                                    </NavCell>
                                </NavGrid>
                                <Content>
                                    <SelectGrid>
                                        <SelectField label="Sort by" />
                                        <SelectField label="Filter by" value="All" />
                                        <SelectField label="Filter by" value="All" />
                                    </SelectGrid>
                                    <CardRow>
                                        <TaskCard />
                                        <TaskCard faded />
                                    </CardRow>
                                </Content>
                            </Lower>
                        </Page>
                        <VScroll $width={15}>
                            <ScrollArrow>
                                <ChevronUp size={11} />
                            </ScrollArrow>
                            <VThumb $height={251} />
                            <ScrollRest />
                            <ScrollArrow>
                                <DownTriangle />
                            </ScrollArrow>
                        </VScroll>
                    </CanvasArea>
                    <Breadcrumb>
                        <span>Approvals_Default</span>
                        <span>&gt;</span>
                        <span>MyTimesheetSubmissions</span>
                    </Breadcrumb>
                    <ErrorsTabs>
                        <PaneTab>Stories</PaneTab>
                        <PaneTab>Changes</PaneTab>
                        <PaneTab $active>
                            Errors
                            <Badge>0</Badge>
                        </PaneTab>
                        <PaneTab>MxAssist Performance Bot</PaneTab>
                        <PaneTab>Console</PaneTab>
                    </ErrorsTabs>
                    <ErrorsTools>
                        <ToggleButton $on>
                            <Icon name="errors" />0 Errors
                        </ToggleButton>
                        <ToggleButton $on>
                            <Icon name="deprecations" />0 Deprecations
                        </ToggleButton>
                        <ToggleButton>
                            <Icon name="warning" />46 Warnings
                        </ToggleButton>
                        <ToggleButton>
                            <Icon name="check" />Check now
                        </ToggleButton>
                        <ToggleButton>
                            <Icon name="page" />Limit to current tab
                        </ToggleButton>
                        <ToggleButton>
                            <Icon name="suppression" />Suppression rules
                        </ToggleButton>
                    </ErrorsTools>
                    <TableHead>
                        {columns.map((c, i) => (
                            <HeadCell key={i}>{c}</HeadCell>
                        ))}
                    </TableHead>
                    <TableBody />
                </Center>
                <RightPane>
                    <TabStrip>
                        <PaneTab>Data Hub</PaneTab>
                        <PaneTab>Properties</PaneTab>
                        <PaneTab $active>Toolbox</PaneTab>
                        <PaneTab>Connector</PaneTab>
                    </TabStrip>
                    <SubTabs>
                        <SubTab $on>Widgets</SubTab>
                        <SubTab>Building blocks</SubTab>
                    </SubTabs>
                    <RightFilter>
                        <Search size={13} strokeWidth={1} />
                        Filter
                    </RightFilter>
                    <ExpandRow>
                        <Icon name="expand" />
                        <ExpandLabel>Expand All</ExpandLabel>
                        <Icon name="collapse" />
                        <ExpandLabel>Collapse All</ExpandLabel>
                    </ExpandRow>
                    <ToolboxBody>
                        <ToolboxList>
                            {toolbox.map((section) => (
                                <div key={section.title}>
                                    <SectionRow>
                                        <Expander $state="open" />
                                        {section.title}
                                    </SectionRow>
                                    {section.items.map(([icon, label]) => (
                                        <WidgetRow key={label}>
                                            <Icon name={icon} />
                                            {label}
                                        </WidgetRow>
                                    ))}
                                </div>
                            ))}
                        </ToolboxList>
                        <VScroll $width={17}>
                            <ScrollArrow>
                                <ChevronUp size={12} />
                            </ScrollArrow>
                            <VThumb $height={356} />
                            <ScrollRest />
                            <ScrollArrow>
                                <ChevronDown size={12} />
                            </ScrollArrow>
                        </VScroll>
                    </ToolboxBody>
                </RightPane>
            </Main>
            <StatusBar>
                <span>Ready</span>
                <StatusRight>
                    English, United States (default)
                    <ChevronUp size={12} />
                </StatusRight>
            </StatusBar>
        </Window>
        <Desktop />
    </Screen>
);

export default App;
